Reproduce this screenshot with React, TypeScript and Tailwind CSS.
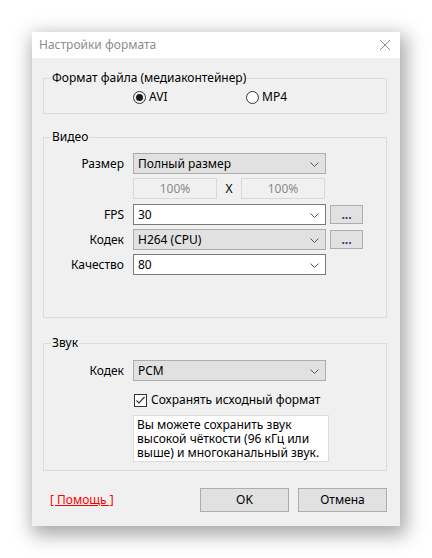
import React from "react";

const font = { fontFamily: '"Noto Sans", "Segoe UI", sans-serif' };

function Chevron() {
  return (
    <svg width="9" height="6" viewBox="0 0 9 6" className="absolute right-[6px] top-[8px]">
      <path d="M0.5 0.5 L4.5 4.5 L8.5 0.5" fill="none" stroke="#555" strokeWidth="1" />
    </svg>
  );
}

function Combo({ value, white }: { value: string; white?: boolean }) {
  return (
    <div
      className={
        "relative h-[21px] w-[193px] border pl-[4px] text-[12px] leading-[19px] text-black " +
        (white ? "bg-white border-[#7a7a7a]" : "bg-[#e1e1e1] border-[#adadad]")
      }
    >
      {value}
      <Chevron />
    </div>
  );
}

function Dots() {
  return (
    <div className="ml-[4px] flex h-[19px] w-[33px] items-center justify-center border border-[#adadad] bg-[#e1e1e1] text-[12px] font-bold leading-none text-[#1d3b70]">
      <span>...</span>
    </div>
  );
}

function Label({ children }: { children: React.ReactNode }) {
  return <div className="w-[89px] shrink-0 pr-[9px] text-right text-[12px] leading-[21px] text-black">{children}</div>;
}

function Group({ title, className, children }: { title: string; className: string; children?: React.ReactNode }) {
  return (
    <div className={"relative border border-[#dcdcdc] " + className}>
      <div className="absolute left-[7px] top-[-10px] bg-[#f0f0f0] px-[1px] text-[12px] leading-[18px] text-black">
        {title}
      </div>
      {children}
    </div>
  );
}

export default function App() {
  return (
    <div className="min-h-[558px] w-[432px] bg-white pl-[32px] pt-[32px]" style={font}>
      <div className="flex h-[494px] w-[368px] flex-col bg-[#f0f0f0] shadow-[3px_6px_18px_3px_rgba(0,0,0,0.35)]">
        <div className="flex h-[26px] items-center justify-between bg-white pl-[7px] pr-[9px]">
          <span className="text-[12px] text-[#8c8c8c]">Настройки формата</span>
          <svg width="12" height="12" viewBox="0 0 12 12">
            <path d="M1 1 L11 11 M11 1 L1 11" stroke="#8a8a8a" strokeWidth="1" />
          </svg>
        </div>
        <div className="flex flex-1 flex-col pl-[11px] pr-[13px]">
          <Group title="Формат файла (медиаконтейнер)" className="mt-[20px] h-[36px]">
            <div className="flex h-full items-center pb-[2px] pt-[4px] text-[12px] text-black">
              <div className="ml-[89px] flex w-[113px] items-center">
                <span className="flex h-[13px] w-[13px] items-center justify-center rounded-full border border-[#333]">
                  <span className="h-[7px] w-[7px] rounded-full bg-[#1a1a1a]" />
                </span>
                <span className="ml-[3px]">AVI</span>
              </div>
              <div className="flex items-center">
                <span className="h-[13px] w-[13px] rounded-full border border-[#333] bg-white" />
                <span className="ml-[3px]">MP4</span>
              </div>
            </div>
          </Group>

          <Group title="Видео" className="mt-[23px] h-[181px] pt-[15px]">
            <div className="flex flex-col gap-[4px]">
              <div className="flex items-center">
                <Label>Размер</Label>
                <Combo value="Полный размер" />
              </div>
              <div className="flex items-center">
                <div className="w-[89px]" />
                <div className="h-[21px] w-[84px] border border-[#d9d9d9] text-center text-[12px] leading-[19px] text-[#8a8a8a]">100%</div>
                <div className="w-[24px] text-center text-[12px] text-black">X</div>
                <div className="h-[21px] w-[84px] border border-[#d9d9d9] text-center text-[12px] leading-[19px] text-[#8a8a8a]">100%</div>
              </div>
              <div className="mt-[1px] flex items-center">
                <Label>FPS</Label>
                <Combo value="30" white />
                <Dots />
              </div>
              <div className="flex items-center">
                <Label>Кодек</Label>
                <Combo value="H264 (CPU)" />
                <Dots />
              </div>
              <div className="flex items-center">
                <Label>Качество</Label>
                <Combo value="80" white />
              </div>
            </div>
          </Group>

          <Group title="Звук" className="mt-[25px] h-[128px] pt-[16px]">
            <div className="flex items-center">
              <Label>Кодек</Label>
              <Combo value="PCM" />
            </div>
            <div className="ml-[90px] mt-[10px] flex items-center text-[12px] text-black">
              <span className="flex h-[13px] w-[13px] items-center justify-center border border-[#333] bg-white">
                <svg width="11" height="11" viewBox="0 0 11 11">
                  <path d="M1.5 5.5 L4 8 L9.5 2" fill="none" stroke="#333" strokeWidth="1.2" />
                </svg>
              </span>
              <span className="ml-[4px]">Сохранять исходный формат</span>
            </div>
            <div className="ml-[89px] mt-[6px] h-[47px] w-[196px] border border-[#dcdcdc] bg-white px-[3px] pt-[2px] text-[12px] leading-[14px] text-black">
              Вы можете сохранить звук высокой чёткости (96 кГц или выше) и многоканальный звук.
            </div>
          </Group>

          <div className="mt-[17px] flex items-center">
            <span className="ml-[7px] text-[12px] text-[#ff0000] underline">[ Помощь ]</span>
            <div className="ml-auto flex gap-[9px]">
              <div className="flex h-[24px] w-[89px] items-center justify-center border border-[#adadad] bg-[#e1e1e1] text-[12px] text-black">OK</div>
              <div className="flex h-[24px] w-[89px] items-center justify-center border border-[#adadad] bg-[#e1e1e1] text-[12px] text-black">Отмена</div>
            </div>
          </div>
        </div>
      </div>
    </div>
  );
}
